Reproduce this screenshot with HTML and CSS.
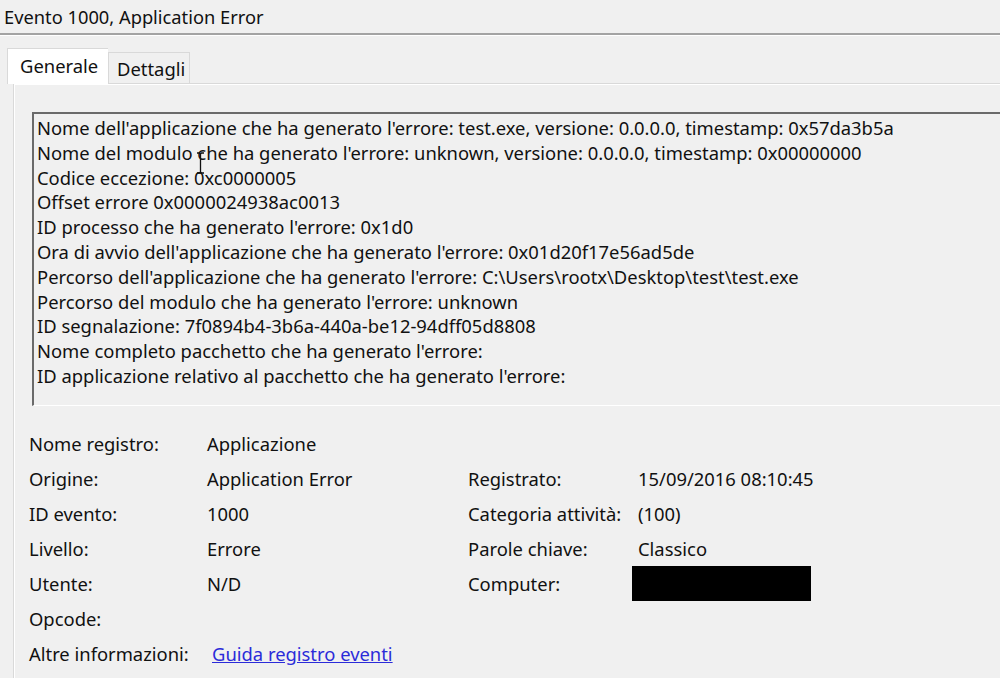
FILE: index.html
```html
<!DOCTYPE html>
<html lang="it">
<head>
  <meta charset="UTF-8" />
  <title>Evento 1000, Application Error</title>
  <link rel="stylesheet" href="styles.css">
</head>
<body>
  <div class="title">Evento 1000, Application Error</div>

  <div class="tabs">
    <div class="tab active">Generale</div>
    <div class="tab">Dettagli</div>
  </div>

  <div class="panel">
    <div class="textbox">
      <div>Nome dell'applicazione che ha generato l'errore: test.exe, versione: 0.0.0.0, timestamp: 0x57da3b5a</div>
      <div>Nome del modulo che ha generato l'errore: unknown, versione: 0.0.0.0, timestamp: 0x00000000</div>
      <div>Codice eccezione: 0xc0000005</div>
      <div>Offset errore 0x0000024938ac0013</div>
      <div>ID processo che ha generato l'errore: 0x1d0</div>
      <div>Ora di avvio dell'applicazione che ha generato l'errore: 0x01d20f17e56ad5de</div>
      <div>Percorso dell'applicazione che ha generato l'errore: C:\Users\rootx\Desktop\test\test.exe</div>
      <div>Percorso del modulo che ha generato l'errore: unknown</div>
      <div>ID segnalazione: 7f0894b4-3b6a-440a-be12-94dff05d8808</div>
      <div>Nome completo pacchetto che ha generato l'errore:</div>
      <div>ID applicazione relativo al pacchetto che ha generato l'errore:</div>
      <svg class="ibeam" width="9" height="22" viewBox="0 0 9 22">
        <path d="M1 1h2.5l1 1 1-1H8M4.5 2v18M1 21h2.5l1-1 1 1H8" fill="none" stroke="#111" stroke-width="1.3"/>
      </svg>
    </div>

    <div class="props">
      <div>Nome registro:</div><div>Applicazione</div><div></div><div></div>
      <div>Origine:</div><div>Application Error</div><div>Registrato:</div><div>15/09/2016 08:10:45</div>
      <div>ID evento:</div><div>1000</div><div>Categoria attività:</div><div>(100)</div>
      <div>Livello:</div><div>Errore</div><div>Parole chiave:</div><div>Classico</div>
      <div>Utente:</div><div>N/D</div><div>Computer:</div><div><span class="redacted"></span></div>
      <div>Opcode:</div><div></div><div></div><div></div>
      <div>Altre informazioni:</div><div><a href="#">Guida registro eventi</a></div><div></div><div></div>
    </div>
  </div>
</body>
</html>
```

FILE: styles.css
```css
/* Base */
body {
  margin: 0;
  height: 678px;
  background: #f0f0f0;
  color: #111;
  font-family: 'Noto Sans', 'Open Sans', sans-serif;
  font-size: 18.4px;
  overflow: hidden;
}

/* Title */
.title {
  height: 33px;
  line-height: 33px;
  padding-left: 4px;
  font-size: 18.3px;
  border-bottom: 2px solid #a3a3a3;
  box-shadow: 0 1px 0 #fff;
}

/* Tabs */
.tabs {
  display: flex;
  align-items: flex-end;
  margin-top: 13px;
  padding-left: 7px;
  position: relative;
  z-index: 1;
}

.tab {
  height: 31px;
  line-height: 31px;
  width: 82px;
  box-sizing: border-box;
  padding-left: 8px;
  border: 1px solid #d9d9d9;
  border-bottom: none;
  background: #f0f0f0;
}

.tab.active {
  height: 36px;
  line-height: 33px;
  width: 101px;
  padding-left: 12px;
  background: #fff;
  border-right: none;
  margin-bottom: -1px;
}

/* Panel */
.panel {
  margin-left: 13px;
  border-top: 1px solid #d9d9d9;
  border-left: 1px solid #d9d9d9;
  box-shadow: inset 1px 1px 0 #fff;
  padding-top: 28px;
  height: 566px;
}

.textbox {
  position: relative;
  margin-left: 18px;
  height: 289px;
  padding: 2px 3px 0;
  border-top: 2px solid #6a6a6a;
  border-left: 2px solid #6a6a6a;
  border-bottom: 1px solid #fff;
  line-height: 24.8px;
  white-space: nowrap;
}

.ibeam {
  position: absolute;
  left: 162px;
  top: 38px;
}

/* Properties */
.props {
  display: grid;
  grid-template-columns: 178px 261px 170px auto;
  grid-auto-rows: 35px;
  align-items: center;
  margin: 20px 0 0 15px;
}

.redacted {
  display: block;
  width: 179px;
  height: 35px;
  margin-left: -6px;
  background: #000;
}

.props a {
  margin-left: 5px;
  color: #2b2bd9;
}
```
